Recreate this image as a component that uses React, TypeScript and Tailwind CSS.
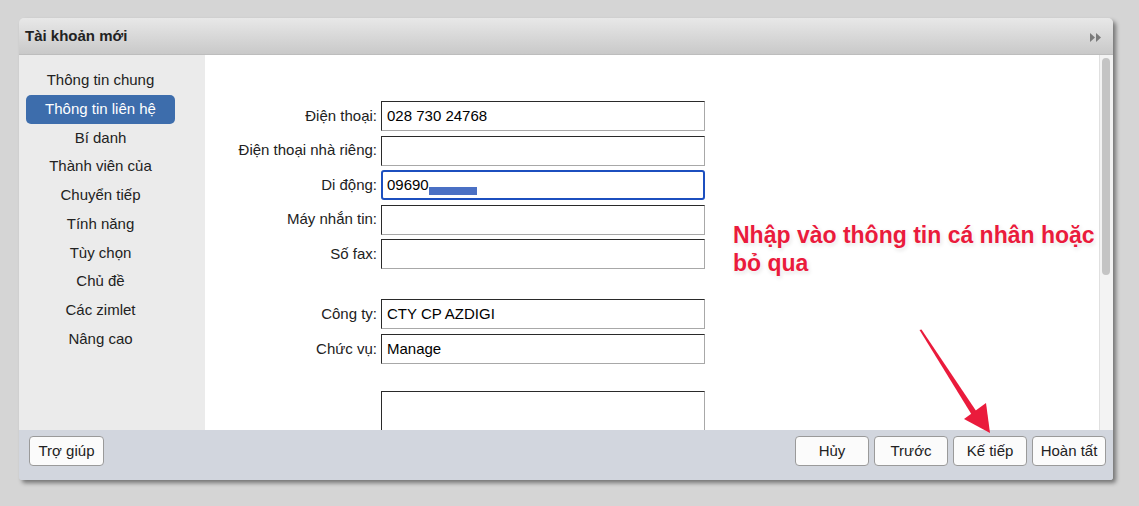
import React from "react";

const navItems = [
  "Thông tin chung",
  "Thông tin liên hệ",
  "Bí danh",
  "Thành viên của",
  "Chuyển tiếp",
  "Tính năng",
  "Tùy chọn",
  "Chủ đề",
  "Các zimlet",
  "Nâng cao",
];

function Field({ label, value, focused, extra }: { label: string; value?: string; focused?: boolean; extra?: boolean }) {
  return (
    <div className="flex items-center h-[30px]">
      <div className="w-[176px] pr-[4px] text-right text-[15px] text-[#222]">{label}</div>
      {focused ? (
        <div className="w-[324px] h-[30px] border-2 border-[#1c4fbf] rounded-[3px] flex items-center pl-[4px] text-[15px] text-black">
          <span>{value}</span>
          {extra && <span className="inline-block w-[48px] h-[8px] mt-[12px] bg-[#4a70c4]"></span>}
        </div>
      ) : (
        <div className="w-[324px] h-[30px] border border-t-[#2a2a2a] border-l-[#2a2a2a] border-r-[#a8a8a8] border-b-[#a8a8a8] flex items-center pl-[5px] text-[15px] text-black">
          {value}
        </div>
      )}
    </div>
  );
}

function Btn({ children, w = "w-[74px]" }: { children: React.ReactNode; w?: string }) {
  return (
    <div className={`${w} h-[30px] rounded-[4px] border border-[#9a9a9a] bg-[#fbfbfb] flex items-center justify-center text-[15px] text-[#222]`}>
      {children}
    </div>
  );
}

export default function App() {
  return (
    <div
      className="w-[1139px] h-[506px] bg-[#d5d5d5] pt-[18px] pl-[19px] overflow-hidden relative"
      style={{ fontFamily: '"Liberation Sans", Arial, sans-serif' }}
    >
      <div className="w-[1094px] h-[462px] flex flex-col rounded-t-[5px] rounded-b-[3px] overflow-hidden shadow-[3px_3px_4px_rgba(0,0,0,0.45)]">
        {/* title bar */}
        <div className="h-[37px] bg-gradient-to-b from-[#e8e8e8] to-[#c9c9c9] flex items-center justify-between pl-[6px] pr-[12px] border-b border-[#bdbdbd]">
          <span className="text-[15px] font-bold text-[#222]">Tài khoản mới</span>
          <svg width="11" height="9" viewBox="0 0 11 9" className="mt-[3px]">
            <polygon points="0,0 5,4.5 0,9" fill="#7a7a7a" />
            <polygon points="6,0 11,4.5 6,9" fill="#7a7a7a" />
          </svg>
        </div>
        {/* body */}
        <div className="h-[375px] flex">
          <div className="w-[186px] bg-[#ebebeb] pt-[11px] pl-[7px]">
            <div className="w-[149px] flex flex-col">
              {navItems.map((it, i) => (
                <div
                  key={it}
                  className={
                    i === 1
                      ? "h-[29px] rounded-[5px] bg-[#3d6dac] text-white flex items-center justify-center text-[15px]"
                      : "h-[28.7px] flex items-center justify-center text-[15px] text-[#222]"
                  }
                >
                  {it}
                </div>
              ))}
            </div>
          </div>
          <div className="flex-1 bg-white pt-[46px] flex flex-col relative overflow-hidden">
            <div className="flex flex-col gap-[4.5px]">
              <Field label="Điện thoại:" value="028 730 24768" />
              <Field label="Điện thoại nhà riêng:" />
              <Field label="Di động:" value="09690" focused extra />
              <Field label="Máy nhắn tin:" />
              <Field label="Số fax:" />
            </div>
            <div className="flex flex-col gap-[5px] mt-[30px]">
              <Field label="Công ty:" value="CTY CP AZDIGI" />
              <Field label="Chức vụ:" value="Manage" />
            </div>
            <div className="mt-[27px] ml-[176px] w-[324px] h-[60px] border border-t-[#2a2a2a] border-l-[#2a2a2a] border-r-[#a8a8a8] border-b-[#a8a8a8] shrink-0"></div>
          </div>
          <div className="w-[14px] bg-[#f3f3f3] border-l border-[#e0e0e0] pt-[3px] pl-[2px]">
            <div className="w-[8px] h-[217px] rounded-full bg-[#c4c4c4]"></div>
          </div>
        </div>
        {/* footer */}
        <div className="h-[50px] bg-[#d2d6de] flex items-start justify-between pt-[6px] pl-[10px] pr-[7px]">
          <Btn w="w-[75px]">Trợ giúp</Btn>
          <div className="flex gap-[5px]">
            <Btn>Hủy</Btn>
            <Btn>Trước</Btn>
            <Btn>Kế tiếp</Btn>
            <Btn>Hoàn tất</Btn>
          </div>
        </div>
      </div>

      {/* annotation */}
      <div
        className="absolute left-[733px] top-[221px] text-[23px] leading-[28px] font-bold text-[#ea1b3c]"
        style={{ textShadow: "0 0 3px #fff, 0 0 6px rgba(255,255,255,0.9), 1px 2px 4px rgba(0,0,0,0.15)" }}
      >
        Nhập vào thông tin cá nhân hoặc
        <br />
        bỏ qua
      </div>
      <svg className="absolute left-0 top-0 pointer-events-none" width="1139" height="506">
        <polygon points="919.5,330 921.5,329.5 977.5,413 972.5,416" fill="#ea1b3c" />
        <polygon points="964,419 986,403 990,433" fill="#ea1b3c" />
      </svg>
    </div>
  );
}
